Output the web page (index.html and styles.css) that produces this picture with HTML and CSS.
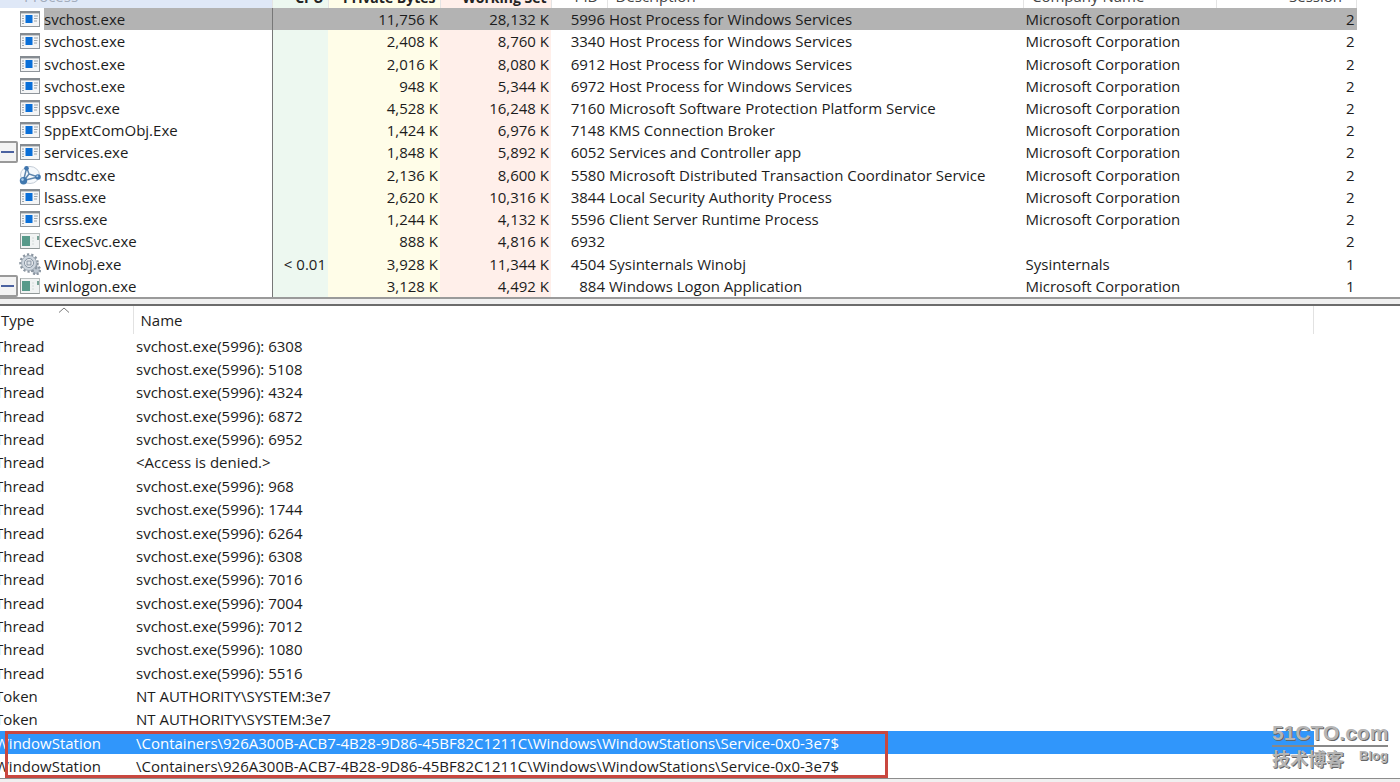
FILE: index.html
```
<!DOCTYPE html>
<html lang="en">
<head>
    <meta charset="UTF-8">
    <meta name="viewport" content="width=device-width, initial-scale=1.0">
    <title>Process Explorer</title>
    <link rel="stylesheet" href="styles.css">
</head>
<body>
    <svg class="icon-defs" aria-hidden="true">
        <symbol id="icon-app" viewBox="0 0 20 16">
            <rect x="0.5" y="0.5" width="19" height="15" fill="#f4f5f6" stroke="#8f959b"/>
            <path d="M0 1.2h20" stroke="#858b91" stroke-width="2.4"/>
            <path d="M2 5h2M2 7.5h2M2 10h2M2 12.500h2M14 5h4M14 7.500h3.500M14 10h3" stroke="#9aa3ab"/>
            <rect x="5.500" y="4" width="7" height="8" fill="#0a6fd8"/>
        </symbol>
        <symbol id="icon-plain" viewBox="0 0 20 16">
            <rect x="0.5" y="0.5" width="19" height="15" fill="#f1f3f3" stroke="#b9bebe"/>
            <path d="M0.500 0.500v15h19" fill="none" stroke="#929999"/>
            <rect x="2" y="3" width="8" height="10" fill="#579a8a"/>
            <path d="M12 5h2M12 8h2M12 11h2" stroke="#d3dad8"/>
            <path d="M18 3v4" stroke="#4f8777" stroke-width="1.500"/>
        </symbol>
        <symbol id="icon-net" viewBox="0 0 22 20">
            <ellipse cx="11" cy="10" rx="9.500" ry="8.500" fill="#f6f9fc" stroke="#c3ccd6"/>
            <path d="M7.500 3.500L4.500 15.500M8 3.500l2 5.500L19 12M10 9l-5 6.500M4.500 15.500L19 12" fill="none" stroke="#5f87ae" stroke-width="1.500"/>
            <circle cx="7.500" cy="3.200" r="2.300" fill="#3f75ad"/>
            <circle cx="4.500" cy="15.800" r="3.700" fill="#4178ae"/>
            <circle cx="3.500" cy="14.600" r="1.300" fill="#a9cbe8"/>
            <circle cx="19" cy="12" r="2.800" fill="#3f75ad"/>
            <circle cx="18.300" cy="11.200" r="1" fill="#a9cbe8"/>
        </symbol>
        <symbol id="icon-gear" viewBox="0 0 22 22">
            <circle cx="17" cy="17" r="4" fill="#bcc6d0" stroke="#8b96a2" stroke-width="2.500" stroke-dasharray="2 1.500"/>
            <circle cx="10" cy="10" r="8.500" fill="none" stroke="#8a95a0" stroke-width="2.500" stroke-dasharray="2.200 2"/>
            <circle cx="10" cy="10" r="7.500" fill="#ced6de" stroke="#a0abb6"/>
            <circle cx="10" cy="10" r="4.500" fill="#eef1f4" stroke="#8492a0"/>
            <rect x="8" y="8" width="4" height="4" fill="#dce2e8" stroke="#8592a0"/>
        </symbol>
    </svg>

    <main class="window">
        <section class="process-pane">
            <table class="process-table">
                <colgroup>
                    <col class="col-process">
                    <col class="col-cpu">
                    <col class="col-private">
                    <col class="col-working">
                    <col class="col-pid">
                    <col class="col-description">
                    <col class="col-company">
                    <col class="col-session">
                </colgroup>
                <thead>
                    <tr>
                        <th class="sorted">Process</th>
                        <th class="num bold">CPU</th>
                        <th class="num bold">Private Bytes</th>
                        <th class="num bold">Working Set</th>
                        <th class="num pid">PID</th>
                        <th>Description</th>
                        <th>Company Name</th>
                        <th class="num session">Session</th>
                    </tr>
                </thead>
                <tbody>
                    <tr class="selected">
                        <td><div class="process"><svg class="icon"><use href="#icon-app"/></svg><span class="name">svchost.exe</span></div></td>
                        <td></td><td>11,756 K</td><td>28,132 K</td><td>5996</td>
                        <td>Host Process for Windows Services</td><td>Microsoft Corporation</td><td>2</td>
                    </tr>
                    <tr>
                        <td><div class="process"><svg class="icon"><use href="#icon-app"/></svg><span class="name">svchost.exe</span></div></td>
                        <td></td><td>2,408 K</td><td>8,760 K</td><td>3340</td>
                        <td>Host Process for Windows Services</td><td>Microsoft Corporation</td><td>2</td>
                    </tr>
                    <tr>
                        <td><div class="process"><svg class="icon"><use href="#icon-app"/></svg><span class="name">svchost.exe</span></div></td>
                        <td></td><td>2,016 K</td><td>8,080 K</td><td>6912</td>
                        <td>Host Process for Windows Services</td><td>Microsoft Corporation</td><td>2</td>
                    </tr>
                    <tr>
                        <td><div class="process"><svg class="icon"><use href="#icon-app"/></svg><span class="name">svchost.exe</span></div></td>
                        <td></td><td>948 K</td><td>5,344 K</td><td>6972</td>
                        <td>Host Process for Windows Services</td><td>Microsoft Corporation</td><td>2</td>
                    </tr>
                    <tr>
                        <td><div class="process"><svg class="icon"><use href="#icon-app"/></svg><span class="name">sppsvc.exe</span></div></td>
                        <td></td><td>4,528 K</td><td>16,248 K</td><td>7160</td>
                        <td>Microsoft Software Protection Platform Service</td><td>Microsoft Corporation</td><td>2</td>
                    </tr>
                    <tr>
                        <td><div class="process"><svg class="icon"><use href="#icon-app"/></svg><span class="name">SppExtComObj.Exe</span></div></td>
                        <td></td><td>1,424 K</td><td>6,976 K</td><td>7148</td>
                        <td>KMS Connection Broker</td><td>Microsoft Corporation</td><td>2</td>
                    </tr>
                    <tr>
                        <td><div class="process"><button class="expander" type="button" aria-label="Collapse services.exe"></button><svg class="icon"><use href="#icon-app"/></svg><span class="name">services.exe</span></div></td>
                        <td></td><td>1,848 K</td><td>5,892 K</td><td>6052</td>
                        <td>Services and Controller app</td><td>Microsoft Corporation</td><td>2</td>
                    </tr>
                    <tr>
                        <td><div class="process"><svg class="icon large"><use href="#icon-net"/></svg><span class="name">msdtc.exe</span></div></td>
                        <td></td><td>2,136 K</td><td>8,600 K</td><td>5580</td>
                        <td>Microsoft Distributed Transaction Coordinator Service</td><td>Microsoft Corporation</td><td>2</td>
                    </tr>
                    <tr>
                        <td><div class="process"><svg class="icon"><use href="#icon-app"/></svg><span class="name">lsass.exe</span></div></td>
                        <td></td><td>2,620 K</td><td>10,316 K</td><td>3844</td>
                        <td>Local Security Authority Process</td><td>Microsoft Corporation</td><td>2</td>
                    </tr>
                    <tr>
                        <td><div class="process"><svg class="icon"><use href="#icon-app"/></svg><span class="name">csrss.exe</span></div></td>
                        <td></td><td>1,244 K</td><td>4,132 K</td><td>5596</td>
                        <td>Client Server Runtime Process</td><td>Microsoft Corporation</td><td>2</td>
                    </tr>
                    <tr>
                        <td><div class="process"><svg class="icon"><use href="#icon-plain"/></svg><span class="name">CExecSvc.exe</span></div></td>
                        <td></td><td>888 K</td><td>4,816 K</td><td>6932</td>
                        <td></td><td></td><td>2</td>
                    </tr>
                    <tr>
                        <td><div class="process"><svg class="icon large"><use href="#icon-gear"/></svg><span class="name">Winobj.exe</span></div></td>
                        <td>&lt; 0.01</td><td>3,928 K</td><td>11,344 K</td><td>4504</td>
                        <td>Sysinternals Winobj</td><td>Sysinternals</td><td>1</td>
                    </tr>
                    <tr>
                        <td><div class="process"><button class="expander" type="button" aria-label="Collapse winlogon.exe"></button><svg class="icon"><use href="#icon-plain"/></svg><span class="name">winlogon.exe</span></div></td>
                        <td></td><td>3,128 K</td><td>4,492 K</td><td>884</td>
                        <td>Windows Logon Application</td><td>Microsoft Corporation</td><td>1</td>
                    </tr>
                </tbody>
            </table>
        </section>

        <div class="splitter"></div>

        <section class="handle-pane">
            <table class="handle-head">
                <thead>
                    <tr>
                        <th class="type">Type
                            <svg class="sort-arrow" viewBox="0 0 12 6"><path d="M1 5.500L6 1l5 4.500" fill="none" stroke="#777"/></svg>
                        </th>
                        <th>Name</th>
                        <th class="rest"></th>
                    </tr>
                </thead>
            </table>
            <table class="handle-table">
                <tbody>
                    <tr><td class="type">Thread</td><td>svchost.exe(5996): 6308</td></tr>
                    <tr><td class="type">Thread</td><td>svchost.exe(5996): 5108</td></tr>
                    <tr><td class="type">Thread</td><td>svchost.exe(5996): 4324</td></tr>
                    <tr><td class="type">Thread</td><td>svchost.exe(5996): 6872</td></tr>
                    <tr><td class="type">Thread</td><td>svchost.exe(5996): 6952</td></tr>
                    <tr><td class="type">Thread</td><td>&lt;Access is denied.&gt;</td></tr>
                    <tr><td class="type">Thread</td><td>svchost.exe(5996): 968</td></tr>
                    <tr><td class="type">Thread</td><td>svchost.exe(5996): 1744</td></tr>
                    <tr><td class="type">Thread</td><td>svchost.exe(5996): 6264</td></tr>
                    <tr><td class="type">Thread</td><td>svchost.exe(5996): 6308</td></tr>
                    <tr><td class="type">Thread</td><td>svchost.exe(5996): 7016</td></tr>
                    <tr><td class="type">Thread</td><td>svchost.exe(5996): 7004</td></tr>
                    <tr><td class="type">Thread</td><td>svchost.exe(5996): 7012</td></tr>
                    <tr><td class="type">Thread</td><td>svchost.exe(5996): 1080</td></tr>
                    <tr><td class="type">Thread</td><td>svchost.exe(5996): 5516</td></tr>
                    <tr><td class="type">Token</td><td>NT AUTHORITY\SYSTEM:3e7</td></tr>
                    <tr><td class="type">Token</td><td>NT AUTHORITY\SYSTEM:3e7</td></tr>
                    <tr class="selected"><td class="type">WindowStation</td><td>\Containers\926A300B-ACB7-4B28-9D86-45BF82C1211C\Windows\WindowStations\Service-0x0-3e7$</td></tr>
                    <tr><td class="type">WindowStation</td><td>\Containers\926A300B-ACB7-4B28-9D86-45BF82C1211C\Windows\WindowStations\Service-0x0-3e7$</td></tr>
                </tbody>
            </table>
            <div class="highlight"></div>
            <div class="watermark">
                <div class="site">51CTO.com</div>
                <div class="tagline"><span class="cn">技术博客</span><span class="blog">Blog</span></div>
            </div>
        </section>

        <footer class="statusbar"></footer>
    </main>
</body>
</html>
```

FILE: styles.css
```
* {
    box-sizing: border-box;
}

body {
    margin: 0;
    background: #fff;
    color: #1c1c1c;
    font-family: "Open Sans", "Noto Sans", "Noto Sans CJK SC", sans-serif;
    font-size: 15px;
    line-height: 20px;
}

.icon-defs {
    display: none;
}

.window {
    display: flex;
    flex-direction: column;
    min-height: 100vh;
    overflow: hidden;
}

table {
    border-collapse: collapse;
    table-layout: fixed;
}

th,
td {
    padding: 0;
    text-align: left;
    font-weight: normal;
    white-space: nowrap;
}

/* upper pane, scrolled so the header is half hidden */
.process-pane {
    height: 297px;
    display: flex;
    align-items: flex-end;
    overflow: hidden;
    padding-right: 43px;
}

.process-table {
    width: 100%;
    height: 311px;
}

.col-process { width: 272px; }
.col-cpu { width: 56px; background: #edf8f0; }
.col-private { width: 112px; background: #fffde8; }
.col-working { width: 111px; background: #ffefea; }
.col-pid { width: 56px; }
.col-description { width: auto; }
.col-company { width: 193px; }
.col-session { width: 140px; }

.process-table th {
    height: 22px;
    line-height: 16px;
    padding: 0 4px 4px 8px;
    border-right: 1px solid #e4e4e4;
    color: #444;
    vertical-align: bottom;
}

.process-table th.sorted {
    padding-left: 24px;
    background: #dfe8f7;
    color: #a3adbd;
}

.process-table th.num {
    text-align: right;
}

.process-table th.bold {
    padding: 0 4px 2px 0;
    color: #222;
    font-size: 14px;
    font-weight: bold;
}

.process-table th.pid {
    padding-right: 8px;
}

.process-table th.session {
    padding-right: 14px;
}

.process-table td {
    padding: 0 2px;
    text-align: right;
}

.process-table td:first-child {
    padding: 0;
    border-right: 1px solid #777;
}

.process-table td:nth-child(6),
.process-table td:nth-child(7) {
    text-align: left;
}

.process-table .selected .name,
.process-table .selected td:not(:first-child) {
    background: #b3b3b3;
}

.process {
    position: relative;
    display: flex;
    align-items: center;
    height: 22px;
    padding-left: 20px;
}

.process .name {
    flex: 1;
    text-align: left;
    line-height: 22px;
}

.icon {
    width: 20px;
    height: 16px;
    margin-right: 4px;
}

.icon.large {
    width: 22px;
    height: 22px;
    margin: 0 3px 0 -1px;
}

.expander {
    position: absolute;
    left: -2px;
    top: 0;
    width: 20px;
    height: 22px;
    padding: 0;
    border: 2px solid #999;
    border-radius: 2px;
    background: #f3f3f3;
}

.expander::before {
    content: "";
    display: block;
    height: 2px;
    margin-left: 1px;
    width: 13px;
    background: #4b62a0;
}

.splitter {
    height: 9px;
    border-top: 2px solid #9a9a9a;
    border-bottom: 2px solid #6c6c6c;
    background: #f0f0f0;
}

/* lower pane */
.handle-pane {
    position: relative;
    flex: 1;
}

.handle-head,
.handle-table {
    width: 100%;
}

.handle-head th {
    position: relative;
    height: 28px;
    padding-left: 7px;
    border-right: 1px solid #e2e2e2;
}

.handle-head .type {
    width: 133px;
    padding-left: 1px;
}

.handle-head .rest {
    width: 87px;
    border-right: 0;
}

.sort-arrow {
    position: absolute;
    left: 58px;
    top: 1px;
    width: 12px;
    height: 6px;
}

.handle-table {
    height: 444px;
}

.handle-table td {
    padding-left: 3px;
}

.handle-table .type {
    width: 133px;
    padding-left: 0;
    text-indent: -5px;
}

.handle-table .selected {
    background: linear-gradient(#3096fb, #3096fb) no-repeat;
    background-size: calc(100% - 86px) 100%;
    color: #fff;
}

.highlight {
    position: absolute;
    left: 5px;
    bottom: 0;
    width: 883px;
    height: 47px;
    border: 3px solid #c9473f;
}

.watermark {
    position: absolute;
    right: 12px;
    bottom: 7px;
    width: 116px;
    color: #b5b5b5;
    font-family: "Liberation Sans", "Noto Sans CJK SC", sans-serif;
    font-weight: bold;
    text-shadow: 1px 1px 0 #666;
}

.watermark .site {
    height: 27px;
    border-bottom: 2px solid #888;
    font-size: 21px;
    line-height: 26px;
}

.watermark .tagline {
    display: flex;
    justify-content: space-between;
    height: 24px;
}

.watermark .cn {
    font-size: 18px;
    line-height: 26px;
}

.watermark .blog {
    font-size: 13px;
    line-height: 18px;
}

.statusbar {
    height: 4px;
    border-top: 1px solid #8c8c8c;
    background: #f0f0f0;
}
```
